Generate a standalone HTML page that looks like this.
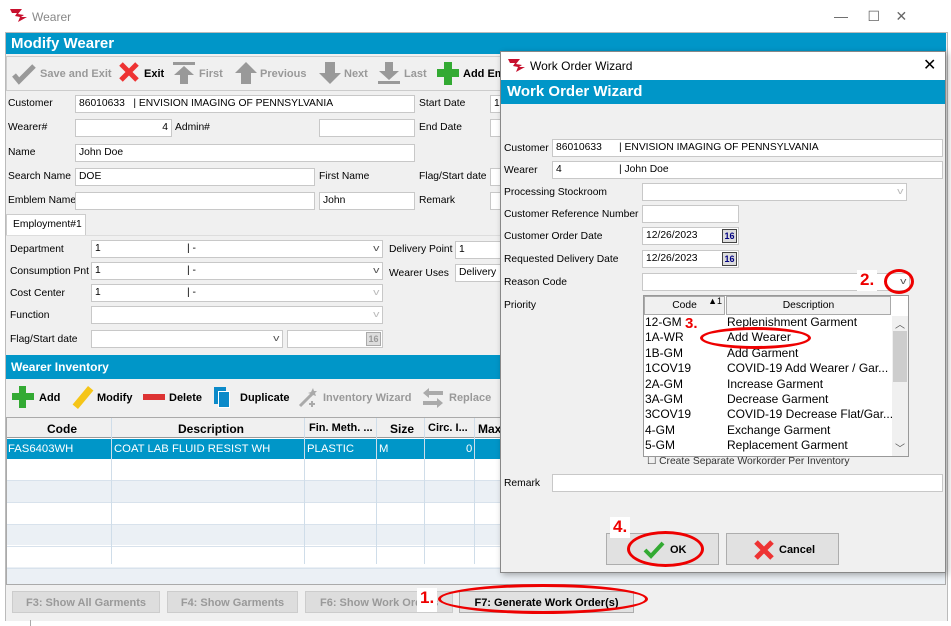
<!DOCTYPE html>
<html><head><meta charset="utf-8"><style>
*{box-sizing:border-box;margin:0;padding:0}
body{width:951px;height:626px;overflow:hidden;background:#fff;font-family:"Liberation Sans",Arial,sans-serif;font-size:10px;color:#000;position:relative}
.a{position:absolute}
.f{position:absolute;background:#fff;border:1px solid #c8c8c8;height:18px;padding:2px 3px;white-space:nowrap;overflow:hidden;font-size:10.3px}
.l{position:absolute;white-space:nowrap;font-size:10.3px}
.blue{position:absolute;background:#0096c8;color:#fff;font-weight:bold}
.cv{position:absolute;right:4px;top:2px;color:#555;font-size:9px;transform:scaleX(1.4)}
.btn{position:absolute;background:#e1e1e1;border:1px solid #adadad;text-align:center;font-weight:bold;white-space:nowrap;overflow:hidden;font-size:11px}
.tb{position:absolute;font-weight:bold;font-size:11px;color:#999;white-space:nowrap}
.cal{position:absolute;right:1px;top:1px;width:15px;height:14px;border:1px solid #444;background:#ddd;font-size:9px;text-align:center;line-height:12px;color:#000080;font-weight:bold}
.red{color:#e00;font-weight:bold;font-size:17px}
.ell{position:absolute;border:3px solid #e00;border-radius:50%}
svg{position:absolute}
</style></head><body>
<div class="a" style="left:0;top:0;width:951px;height:32px;background:#fff"></div>
<svg style="left:9px;top:7px" width="20" height="16" viewBox="0 0 20 16"><path d="M1 2h12l-4 5 6 1-3 2h6l-9 5 2-5-5-1 2-3H3z" fill="#c8102e"/></svg>
<div class="l" style="left:32px;top:10px;color:#888;font-size:12px">Wearer</div>
<div class="l" style="left:834px;top:8px;color:#666;font-size:14px">—&nbsp;&nbsp;&nbsp;&nbsp;&nbsp;☐&nbsp;&nbsp;&nbsp;&nbsp;✕</div>
<div class="a" style="left:5px;top:32px;width:943px;height:590px;background:#f0f0f0;border:1px solid #bbb"></div>
<div class="blue" style="left:6px;top:33px;width:940px;height:21px;font-size:15px;padding:2px 5px">Modify Wearer</div>
<div class="a" style="left:6px;top:56px;width:940px;height:35px;border:1px solid #ccc;background:#f0f0f0"></div>
<svg style="left:12px;top:63px" width="24" height="22" viewBox="0 0 24 22"><path d="M2 12l5 6L22 3" stroke="#999" stroke-width="5" fill="none"/></svg>
<div class="tb" style="left:40px;top:68px">Save and Exit</div>
<svg style="left:118px;top:61px" width="22" height="22" viewBox="0 0 22 22"><path d="M3 3l16 16M19 3L3 19" stroke="#e33" stroke-width="5"/></svg>
<div class="tb" style="left:144px;top:68px;color:#000">Exit</div>
<svg style="left:172px;top:61px" width="24" height="24" viewBox="0 0 24 24"><path d="M1 1h22v3H1zM12 5l10 9h-6v9H8v-9H2z" fill="#999"/></svg>
<div class="tb" style="left:199px;top:68px">First</div>
<svg style="left:234px;top:61px" width="24" height="24" viewBox="0 0 24 24"><path d="M12 1l11 11h-6v11H7V12H1z" fill="#999"/></svg>
<div class="tb" style="left:260px;top:68px">Previous</div>
<svg style="left:318px;top:61px" width="24" height="24" viewBox="0 0 24 24"><path d="M12 23L1 12h6V1h10v11h6z" fill="#999"/></svg>
<div class="tb" style="left:344px;top:68px">Next</div>
<svg style="left:377px;top:61px" width="24" height="24" viewBox="0 0 24 24"><path d="M1 20h22v3H1zM12 19L2 10h6V1h8v9h6z" fill="#999"/></svg>
<div class="tb" style="left:404px;top:68px">Last</div>
<div class="a" style="left:444px;top:62px;width:8px;height:23px;background:#3a3"></div>
<div class="a" style="left:437px;top:69px;width:22px;height:8px;background:#3a3"></div>
<div class="tb" style="left:463px;top:68px;color:#000">Add Em</div>

<div class="l" style="left:8px;top:98px">Customer</div>
<div class="f" style="left:75px;top:95px;width:340px">86010633 &nbsp;&nbsp;| ENVISION IMAGING OF PENNSYLVANIA</div>
<div class="l" style="left:419px;top:98px">Start Date</div>
<div class="f" style="left:490px;top:95px;width:20px">1</div>
<div class="l" style="left:8px;top:122px">Wearer#</div>
<div class="f" style="left:75px;top:119px;width:97px;text-align:right">4</div>
<div class="l" style="left:175px;top:122px">Admin#</div>
<div class="f" style="left:319px;top:119px;width:96px"></div>
<div class="l" style="left:419px;top:122px">End Date</div>
<div class="f" style="left:490px;top:119px;width:20px"></div>
<div class="l" style="left:8px;top:147px">Name</div>
<div class="f" style="left:75px;top:144px;width:340px">John Doe</div>
<div class="l" style="left:8px;top:171px">Search Name</div>
<div class="f" style="left:75px;top:168px;width:240px">DOE</div>
<div class="l" style="left:319px;top:171px">First Name</div>
<div class="l" style="left:419px;top:171px">Flag/Start date</div>
<div class="f" style="left:490px;top:168px;width:20px"></div>
<div class="l" style="left:8px;top:195px">Emblem Name</div>
<div class="f" style="left:75px;top:192px;width:240px"></div>
<div class="f" style="left:319px;top:192px;width:96px">John</div>
<div class="l" style="left:419px;top:195px">Remark</div>
<div class="f" style="left:490px;top:192px;width:20px"></div>

<div class="a" style="left:6px;top:214px;width:80px;height:22px;background:#fff;border:1px solid #ccc;border-bottom:none;padding:4px 6px;font-size:10.3px">Employment#1</div>
<div class="a" style="left:6px;top:235px;width:500px;height:1px;background:#ddd"></div>
<div class="l" style="left:10px;top:244px">Department</div>
<div class="f" style="left:91px;top:240px;width:292px">1<span style="position:absolute;left:95px">| -</span><span class="cv">v</span></div>
<div class="l" style="left:389px;top:244px">Delivery Point</div>
<div class="f" style="left:455px;top:241px;width:50px">1</div>
<div class="l" style="left:10px;top:266px">Consumption Pnt</div>
<div class="f" style="left:91px;top:262px;width:292px">1<span style="position:absolute;left:95px">| -</span><span class="cv">v</span></div>
<div class="l" style="left:389px;top:268px">Wearer Uses</div>
<div class="f" style="left:455px;top:264px;width:50px">Delivery</div>
<div class="l" style="left:10px;top:288px">Cost Center</div>
<div class="f" style="left:91px;top:284px;width:292px">1<span style="position:absolute;left:95px">| -</span><span class="cv" style="color:#bbb">v</span></div>
<div class="l" style="left:10px;top:310px">Function</div>
<div class="f" style="left:91px;top:306px;width:292px"><span class="cv" style="color:#bbb">v</span></div>
<div class="l" style="left:10px;top:334px">Flag/Start date</div>
<div class="f" style="left:91px;top:330px;width:192px"><span class="cv">v</span></div>
<div class="f" style="left:287px;top:330px;width:96px;background:#fff"><span class="cal" style="color:#999;border-color:#aaa">16</span></div>

<div class="blue" style="left:6px;top:355px;width:940px;height:24px;font-size:12px;padding:5px 5px">Wearer Inventory</div>
<div class="a" style="left:19px;top:386px;width:7px;height:22px;background:#3a3"></div>
<div class="a" style="left:12px;top:393px;width:22px;height:7px;background:#3a3"></div>
<div class="tb" style="left:39px;top:392px;color:#000">Add</div>
<div class="a" style="left:71px;top:394px;width:24px;height:7px;background:#f5c518;transform:rotate(-50deg)"></div>
<div class="tb" style="left:97px;top:392px;color:#000">Modify</div>
<div class="a" style="left:143px;top:394px;width:22px;height:6px;background:#d33"></div>
<div class="tb" style="left:169px;top:392px;color:#000">Delete</div>
<div class="a" style="left:214px;top:387px;width:12px;height:17px;background:#0b8ac9"></div>
<div class="a" style="left:218px;top:391px;width:12px;height:17px;background:#0b8ac9;border:1px solid #fff"></div>
<div class="tb" style="left:240px;top:392px;color:#000">Duplicate</div>
<svg style="left:298px;top:386px" width="22" height="22" viewBox="0 0 22 22"><path d="M2 20L14 8" stroke="#aaa" stroke-width="3"/><path d="M15 2l1 3 3 0-2 2 1 3-3-1-2 2 0-3-3-1 3-1z" fill="#aaa"/><path d="M14 15v6M11 18h6" stroke="#aaa" stroke-width="2"/></svg>
<div class="tb" style="left:323px;top:392px">Inventory Wizard</div>
<svg style="left:422px;top:387px" width="22" height="22" viewBox="0 0 22 22"><path d="M1 6l6-5v3h14v4H7v3zM21 16l-6 5v-3H1v-4h14v-3z" fill="#aaa"/></svg>
<div class="tb" style="left:449px;top:392px">Replace</div>

<div class="a" style="left:6px;top:417px;width:940px;height:168px;background:#fff;border:1px solid #aaa"></div>
<div class="a" style="left:7px;top:418px;width:938px;height:20px;background:#f0f0f0;border-bottom:1px solid #999"></div>
<div class="a" style="left:7px;top:439px;width:938px;height:20px;background:#0096c8"></div>
<div class="a" style="left:7px;top:481px;width:938px;height:21px;background:#ebf0f5"></div>
<div class="a" style="left:7px;top:524px;width:938px;height:21px;background:#ebf0f5"></div>
<div class="a" style="left:7px;top:567px;width:938px;height:17px;background:#ebf0f5"></div>
<div class="a" style="left:7px;top:459px;width:938px;height:126px;background:repeating-linear-gradient(#0000 0 21px,#d8e2ec 21px 22px)"></div>
<div class="a" style="left:111px;top:418px;width:1px;height:146px;background:#cfdde9"></div>
<div class="a" style="left:304px;top:418px;width:1px;height:146px;background:#cfdde9"></div>
<div class="a" style="left:376px;top:418px;width:1px;height:146px;background:#cfdde9"></div>
<div class="a" style="left:424px;top:418px;width:1px;height:146px;background:#cfdde9"></div>
<div class="a" style="left:474px;top:418px;width:1px;height:146px;background:#cfdde9"></div>
<div class="l" style="left:47px;top:422px;font-weight:bold;font-size:12px">Code</div>
<div class="l" style="left:178px;top:422px;font-weight:bold;font-size:12px">Description</div>
<div class="l" style="left:309px;top:422px;font-weight:bold;font-size:11px">Fin. Meth. ...</div>
<div class="l" style="left:390px;top:422px;font-weight:bold;font-size:12px">Size</div>
<div class="l" style="left:428px;top:422px;font-weight:bold;font-size:11px">Circ. I...</div>
<div class="l" style="left:478px;top:422px;font-weight:bold;font-size:12px">Max</div>
<div class="l" style="left:8px;top:443px;color:#fff;font-size:11.3px">FAS6403WH</div>
<div class="l" style="left:114px;top:443px;color:#fff;font-size:11.3px">COAT LAB FLUID RESIST WH</div>
<div class="l" style="left:307px;top:443px;color:#fff;font-size:11.3px">PLASTIC</div>
<div class="l" style="left:379px;top:443px;color:#fff;font-size:11.3px">M</div>
<div class="l" style="left:466px;top:443px;color:#fff;font-size:11.3px">0</div>

<div class="btn" style="left:12px;top:591px;width:148px;height:22px;color:#999;padding-top:5px;background:#ddd;border-color:#ccc">F3: Show All Garments</div>
<div class="btn" style="left:167px;top:591px;width:131px;height:22px;color:#999;padding-top:5px;background:#ddd;border-color:#ccc">F4: Show Garments</div>
<div class="btn" style="left:305px;top:591px;width:148px;height:22px;color:#999;padding-top:5px;background:#ddd;border-color:#ccc;text-align:left;padding-left:14px">F6: Show Work Orders</div>
<div class="btn" style="left:459px;top:591px;width:175px;height:22px;padding-top:5px;color:#000">F7: Generate Work Order(s)</div>
<div class="a red" style="left:417px;top:588px;background:#fff;padding:0 3px;height:24px">1.</div>
<div class="ell" style="left:438px;top:584px;width:210px;height:30px"></div>
<div class="a" style="left:5px;top:621px;width:943px;height:5px;background:#fff"></div>
<div class="a" style="left:30px;top:620px;width:1px;height:6px;background:#aaa"></div>

<!-- dialog -->
<div class="a" style="left:500px;top:51px;width:446px;height:522px;background:#f0f0f0;border:1px solid #888;box-shadow:2px 2px 6px rgba(0,0,0,.3)"></div>
<div class="a" style="left:501px;top:52px;width:444px;height:28px;background:#fff"></div>
<svg style="left:507px;top:57px" width="20" height="16" viewBox="0 0 20 16"><path d="M1 2h12l-4 5 6 1-3 2h6l-9 5 2-5-5-1 2-3H3z" fill="#c8102e"/></svg>
<div class="l" style="left:530px;top:59px;font-size:12px">Work Order Wizard</div>
<div class="l" style="left:923px;top:55px;font-size:16px">✕</div>
<div class="blue" style="left:501px;top:80px;width:444px;height:24px;font-size:15px;padding:3px 6px">Work Order Wizard</div>
<div class="l" style="left:504px;top:143px">Customer</div>
<div class="f" style="left:552px;top:139px;width:391px">86010633 &nbsp;&nbsp;&nbsp;&nbsp;&nbsp;| ENVISION IMAGING OF PENNSYLVANIA</div>
<div class="l" style="left:504px;top:165px">Wearer</div>
<div class="f" style="left:552px;top:161px;width:391px">4<span style="position:absolute;left:66px">| John Doe</span></div>
<div class="l" style="left:504px;top:187px">Processing Stockroom</div>
<div class="f" style="left:642px;top:183px;width:265px"><span class="cv" style="color:#bbb">v</span></div>
<div class="l" style="left:504px;top:209px">Customer Reference Number</div>
<div class="f" style="left:642px;top:205px;width:97px"></div>
<div class="l" style="left:504px;top:231px">Customer Order Date</div>
<div class="f" style="left:642px;top:227px;width:97px">12/26/2023<span class="cal">16</span></div>
<div class="l" style="left:504px;top:254px">Requested Delivery Date</div>
<div class="f" style="left:642px;top:250px;width:97px">12/26/2023<span class="cal">16</span></div>
<div class="l" style="left:504px;top:277px">Reason Code</div>
<div class="f" style="left:642px;top:273px;width:268px"><span class="cv">v</span></div>
<div class="a red" style="left:857px;top:270px;background:#fff;padding:0 3px;height:21px">2.</div>
<div class="ell" style="left:884px;top:269px;width:30px;height:25px"></div>
<div class="l" style="left:504px;top:300px">Priority</div>

<div class="l" style="left:647px;top:455px;color:#333">☐ Create Separate Workorder Per Inventory</div>
<div class="a" style="left:643px;top:295px;width:266px;height:162px;background:#fff;border:1px solid #999"></div>
<div class="a" style="left:644px;top:296px;width:81px;height:19px;background:#f0f0f0;border:1px solid #aaa;text-align:center;padding-top:3px;font-size:10.3px">Code<span style="position:absolute;right:2px;top:-1px;font-size:9px">▲1</span></div>
<div class="a" style="left:726px;top:296px;width:165px;height:19px;background:#f0f0f0;border:1px solid #aaa;text-align:center;padding-top:3px;font-size:10.3px">Description</div>
<div class="a" style="left:892px;top:316px;width:16px;height:140px;background:#f0f0f0"></div>
<div class="a" style="left:893px;top:331px;width:14px;height:51px;background:#cdcdcd"></div>
<div class="l" style="left:895px;top:316px;font-size:10px;color:#555">︿</div>
<div class="l" style="left:895px;top:440px;font-size:10px;color:#555">﹀</div>
<div class="a" style="left:645px;top:315px;font-size:12px;line-height:15.4px">12-GM<br>1A-WR<br>1B-GM<br>1COV19<br>2A-GM<br>3A-GM<br>3COV19<br>4-GM<br>5-GM</div>
<div class="a" style="left:727px;top:315px;font-size:12px;line-height:15.4px;white-space:nowrap">Replenishment Garment<br>Add Wearer<br>Add Garment<br>COVID-19 Add Wearer / Gar...<br>Increase Garment<br>Decrease Garment<br>COVID-19 Decrease Flat/Gar...<br>Exchange Garment<br>Replacement Garment</div>
<div class="a red" style="left:685px;top:315px;font-size:15px">3.</div>
<div class="ell" style="left:700px;top:327px;width:111px;height:22px"></div>

<div class="l" style="left:504px;top:478px">Remark</div>
<div class="f" style="left:552px;top:474px;width:391px"></div>
<div class="btn" style="left:606px;top:533px;width:113px;height:32px"><svg style="left:36px;top:7px" width="22" height="18" viewBox="0 0 22 18"><path d="M2 9l6 6L20 2" stroke="#3a3" stroke-width="4" fill="none"/></svg><span style="position:absolute;left:63px;top:10px">OK</span></div>
<div class="btn" style="left:726px;top:533px;width:113px;height:32px"><svg style="left:26px;top:5px" width="22" height="22" viewBox="0 0 22 22"><path d="M3 3l16 16M19 3L3 19" stroke="#e33" stroke-width="5"/></svg><span style="position:absolute;left:52px;top:10px">Cancel</span></div>
<div class="a red" style="left:610px;top:517px;background:#fff;padding:0 3px;height:21px">4.</div>
<div class="ell" style="left:627px;top:531px;width:77px;height:36px"></div>
</body></html>
